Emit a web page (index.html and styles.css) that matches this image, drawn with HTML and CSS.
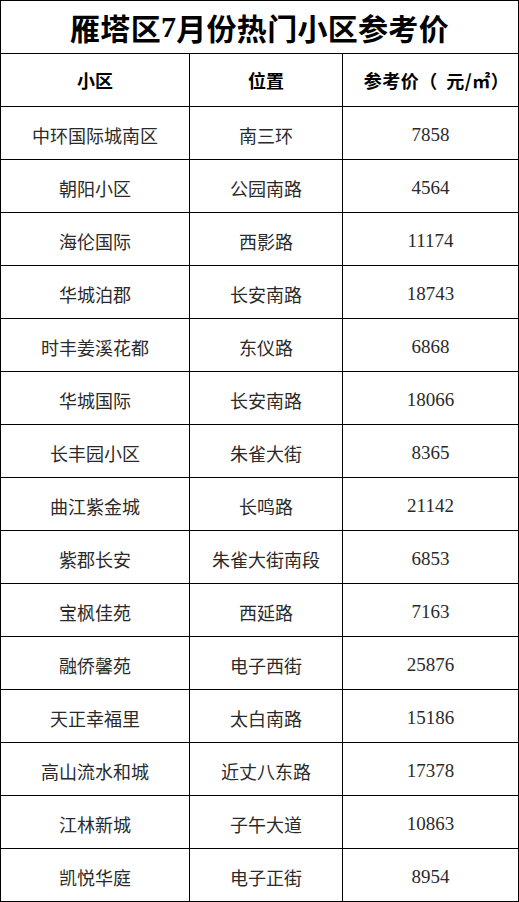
FILE: index.html
```html
<!DOCTYPE html>
<html lang="zh-CN">
<head>
<meta charset="utf-8">
<title>雁塔区7月份热门小区参考价</title>
<link rel="stylesheet" href="styles.css">
</head>
<body>
<div class="table">
  <div class="cell title">雁塔区<span class="num">7</span>月份热门小区参考价</div>
  <div class="cell head">小区</div>
  <div class="cell head">位置</div>
  <div class="cell head price-head">参考价（&nbsp;元/㎡）</div>

  <div class="cell">中环国际城南区</div><div class="cell">南三环</div><div class="cell num">7858</div>
  <div class="cell">朝阳小区</div><div class="cell">公园南路</div><div class="cell num">4564</div>
  <div class="cell">海伦国际</div><div class="cell">西影路</div><div class="cell num">11174</div>
  <div class="cell">华城泊郡</div><div class="cell">长安南路</div><div class="cell num">18743</div>
  <div class="cell">时丰姜溪花都</div><div class="cell">东仪路</div><div class="cell num">6868</div>
  <div class="cell">华城国际</div><div class="cell">长安南路</div><div class="cell num">18066</div>
  <div class="cell">长丰园小区</div><div class="cell">朱雀大街</div><div class="cell num">8365</div>
  <div class="cell">曲江紫金城</div><div class="cell">长鸣路</div><div class="cell num">21142</div>
  <div class="cell">紫郡长安</div><div class="cell">朱雀大街南段</div><div class="cell num">6853</div>
  <div class="cell">宝枫佳苑</div><div class="cell">西延路</div><div class="cell num">7163</div>
  <div class="cell">融侨馨苑</div><div class="cell">电子西街</div><div class="cell num">25876</div>
  <div class="cell">天正幸福里</div><div class="cell">太白南路</div><div class="cell num">15186</div>
  <div class="cell">高山流水和城</div><div class="cell">近丈八东路</div><div class="cell num">17378</div>
  <div class="cell">江林新城</div><div class="cell">子午大道</div><div class="cell num">10863</div>
  <div class="cell">凯悦华庭</div><div class="cell">电子正街</div><div class="cell num">8954</div>
</div>
</body>
</html>
```

FILE: styles.css
```css
html, body {
  margin: 0;
  padding: 0;
  background: #ffffff;
}

.table {
  display: grid;
  grid-template-columns: 188px 152px 175px;
  grid-auto-rows: 52px;
  gap: 1px;
  padding: 1px;
  width: 517px;
  background: #000000;
  font-family: "Noto Sans CJK SC", sans-serif;
}

.cell {
  background: #ffffff;
  display: flex;
  align-items: center;
  justify-content: center;
  font-size: 18px;
  color: #2a2a2a;
  padding-top: 3px;
  box-sizing: border-box;
  white-space: nowrap;
}

.num {
  font-family: "Liberation Serif", "Noto Sans CJK SC", serif;
  font-size: 19px;
}

.title {
  grid-column: 1 / -1;
  font-size: 30px;
  font-weight: 700;
  color: #000000;
  letter-spacing: 0.3px;
  padding-top: 0;
}

.title .num {
  font-size: 30px;
  font-weight: 700;
}

.head {
  font-size: 18px;
  font-weight: 700;
  color: #000000;
  padding-top: 0;
}

.price-head {
  padding-left: 12px;
  word-spacing: 4px;
  letter-spacing: 0.5px;
}
```
